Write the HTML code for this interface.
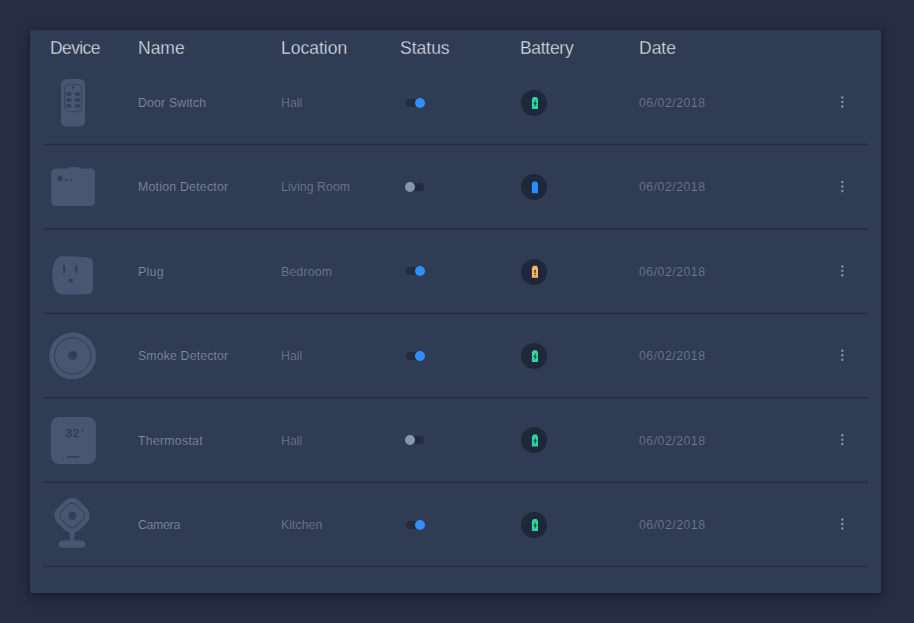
<!DOCTYPE html>
<html><head><meta charset="utf-8">
<style>
html,body{margin:0;padding:0;}
body{width:914px;height:623px;background:#262e43;position:relative;overflow:hidden;font-family:"Liberation Sans",sans-serif;}
.card{position:absolute;left:30px;top:30px;width:851px;height:563px;background:#303b54;border-radius:1.5px;box-shadow:0 2px 5px rgba(14,18,34,0.45),0 3px 14px rgba(14,18,34,0.3);}
.h{position:absolute;top:38px;color:#e2e7f0;font-size:17.5px;-webkit-text-stroke:0.35px #303b54;line-height:20px;white-space:nowrap;}
.t{position:absolute;font-size:12.3px;color:#818ca5;-webkit-text-stroke:0.15px #303b54;white-space:nowrap;line-height:14px;letter-spacing:0.25px;}
.t.loc{color:#6f7a92;}
.t.date{color:#6f7a92;letter-spacing:0.5px;}
.tog{position:absolute;width:18px;height:8px;border-radius:4px;background:#222b3f;}
.knob{position:absolute;top:-1px;width:10px;height:10px;border-radius:50%;}
.bat{position:absolute;width:26px;height:26px;border-radius:50%;background:#1f273b;}
.kebab{position:absolute;width:3px;}
.kebab i{display:block;width:2.4px;height:2.4px;border-radius:50%;background:#8f9ab0;margin-bottom:2px;}
svg{position:absolute;overflow:visible;}
</style></head>
<body>
<div class="card"></div>
<svg style="left:0;top:0" width="914" height="623"><g stroke="#242c41" stroke-width="1.35">
<line x1="43.5" x2="868" y1="144.50" y2="144.50"/>
<line x1="43.5" x2="868" y1="228.90" y2="228.90"/>
<line x1="43.5" x2="868" y1="313.30" y2="313.30"/>
<line x1="43.5" x2="868" y1="397.70" y2="397.70"/>
<line x1="43.5" x2="868" y1="482.10" y2="482.10"/>
<line x1="43.5" x2="868" y1="566.50" y2="566.50"/>
</g></svg>
<div class="h" style="left:50px;letter-spacing:-0.6px">Device</div>
<div class="h" style="left:138px">Name</div>
<div class="h" style="left:281px">Location</div>
<div class="h" style="left:400px">Status</div>
<div class="h" style="left:520px;letter-spacing:-0.3px">Battery</div>
<div class="h" style="left:639px">Date</div>
<div class="t" style="left:138px;top:95.9px;letter-spacing:0.18px">Door Switch</div>
<div class="t loc" style="left:281px;top:95.9px;letter-spacing:0px">Hall</div>
<div class="t date" style="left:639px;top:95.9px">06/02/2018</div>
<div class="tog" style="left:406px;top:98.5px"><div class="knob" style="left:9px;background:#2f8fff"></div></div>
<div class="bat" style="left:521.3px;top:89.7px"></div>
<svg style="left:0;top:0" width="914" height="623"><path d="M531.9 108.90 L531.9 99.10 L533.3 97.00 L536.6 97.00 L538 99.10 L538 108.90 Z" fill="#2fd59c"/><path d="M536.1 99.60 L533.4 103.70 L535.0 103.70 L534.3 107.30 L536.9 103.00 L535.3 103.00 Z" fill="#173a36"/></svg>
<svg style="left:0;top:0" width="914" height="623"><g fill="#8591a8"><circle cx="842.3" cy="97.60" r="1.25"/><circle cx="842.3" cy="102.05" r="1.25"/><circle cx="842.3" cy="106.50" r="1.25"/></g></svg>
<div class="t" style="left:138px;top:180.3px;letter-spacing:0.236px">Motion Detector</div>
<div class="t loc" style="left:281px;top:180.3px;letter-spacing:0.07px">Living Room</div>
<div class="t date" style="left:639px;top:180.3px">06/02/2018</div>
<div class="tog" style="left:406px;top:182.9px"><div class="knob" style="left:-1px;background:#8896ad"></div></div>
<div class="bat" style="left:521.3px;top:174.1px"></div>
<svg style="left:0;top:0" width="914" height="623"><path d="M531.9 193.30 L531.9 183.50 L533.3 181.40 L536.6 181.40 L538 183.50 L538 193.30 Z" fill="#2b8cff"/></svg>
<svg style="left:0;top:0" width="914" height="623"><g fill="#8591a8"><circle cx="842.3" cy="182.00" r="1.25"/><circle cx="842.3" cy="186.45" r="1.25"/><circle cx="842.3" cy="190.90" r="1.25"/></g></svg>
<div class="t" style="left:138px;top:264.7px;letter-spacing:0.3px">Plug</div>
<div class="t loc" style="left:281px;top:264.7px;letter-spacing:0.167px">Bedroom</div>
<div class="t date" style="left:639px;top:264.7px">06/02/2018</div>
<div class="tog" style="left:406px;top:267.3px"><div class="knob" style="left:9px;background:#2f8fff"></div></div>
<div class="bat" style="left:521.3px;top:258.5px"></div>
<svg style="left:0;top:0" width="914" height="623"><path d="M531.9 277.70 L531.9 267.90 L533.3 265.80 L536.6 265.80 L538 267.90 L538 277.70 Z" fill="#f7b661"/><rect x="534.35" y="269.90" width="1.3" height="3" fill="#2a2118"/><circle cx="535" cy="274.60" r="0.75" fill="#2a2118"/></svg>
<svg style="left:0;top:0" width="914" height="623"><g fill="#8591a8"><circle cx="842.3" cy="266.40" r="1.25"/><circle cx="842.3" cy="270.85" r="1.25"/><circle cx="842.3" cy="275.30" r="1.25"/></g></svg>
<div class="t" style="left:138px;top:349.1px;letter-spacing:0.154px">Smoke Detector</div>
<div class="t loc" style="left:281px;top:349.1px;letter-spacing:0px">Hall</div>
<div class="t date" style="left:639px;top:349.1px">06/02/2018</div>
<div class="tog" style="left:406px;top:351.7px"><div class="knob" style="left:9px;background:#2f8fff"></div></div>
<div class="bat" style="left:521.3px;top:342.9px"></div>
<svg style="left:0;top:0" width="914" height="623"><path d="M531.9 362.10 L531.9 352.30 L533.3 350.20 L536.6 350.20 L538 352.30 L538 362.10 Z" fill="#2fd59c"/><path d="M536.1 352.80 L533.4 356.90 L535.0 356.90 L534.3 360.50 L536.9 356.20 L535.3 356.20 Z" fill="#173a36"/></svg>
<svg style="left:0;top:0" width="914" height="623"><g fill="#8591a8"><circle cx="842.3" cy="350.80" r="1.25"/><circle cx="842.3" cy="355.25" r="1.25"/><circle cx="842.3" cy="359.70" r="1.25"/></g></svg>
<div class="t" style="left:138px;top:433.5px;letter-spacing:0.267px">Thermostat</div>
<div class="t loc" style="left:281px;top:433.5px;letter-spacing:0px">Hall</div>
<div class="t date" style="left:639px;top:433.5px">06/02/2018</div>
<div class="tog" style="left:406px;top:436.1px"><div class="knob" style="left:-1px;background:#8896ad"></div></div>
<div class="bat" style="left:521.3px;top:427.3px"></div>
<svg style="left:0;top:0" width="914" height="623"><path d="M531.9 446.50 L531.9 436.70 L533.3 434.60 L536.6 434.60 L538 436.70 L538 446.50 Z" fill="#2fd59c"/><path d="M536.1 437.20 L533.4 441.30 L535.0 441.30 L534.3 444.90 L536.9 440.60 L535.3 440.60 Z" fill="#173a36"/></svg>
<svg style="left:0;top:0" width="914" height="623"><g fill="#8591a8"><circle cx="842.3" cy="435.20" r="1.25"/><circle cx="842.3" cy="439.65" r="1.25"/><circle cx="842.3" cy="444.10" r="1.25"/></g></svg>
<div class="t" style="left:138px;top:517.9px;letter-spacing:-0.3px">Camera</div>
<div class="t loc" style="left:281px;top:517.9px;letter-spacing:0.05px">Kitchen</div>
<div class="t date" style="left:639px;top:517.9px">06/02/2018</div>
<div class="tog" style="left:406px;top:520.5px"><div class="knob" style="left:9px;background:#2f8fff"></div></div>
<div class="bat" style="left:521.3px;top:511.7px"></div>
<svg style="left:0;top:0" width="914" height="623"><path d="M531.9 530.90 L531.9 521.10 L533.3 519.00 L536.6 519.00 L538 521.10 L538 530.90 Z" fill="#2fd59c"/><path d="M536.1 521.60 L533.4 525.70 L535.0 525.70 L534.3 529.30 L536.9 525.00 L535.3 525.00 Z" fill="#173a36"/></svg>
<svg style="left:0;top:0" width="914" height="623"><g fill="#8591a8"><circle cx="842.3" cy="519.60" r="1.25"/><circle cx="842.3" cy="524.05" r="1.25"/><circle cx="842.3" cy="528.50" r="1.25"/></g></svg>
<svg style="left:0;top:0" width="914" height="623" viewBox="0 0 914 623"><rect x="61" y="79" width="24" height="47.5" rx="5.5" fill="#485671"/>
<rect x="64.6" y="84.4" width="17" height="27.2" rx="5" fill="none" stroke="#36415b" stroke-width="1"/>
<path d="M71.1 86.3 L74.7 86.3 L72.9 89.3 Z" fill="#323d56"/>
<g fill="#323d56">
<rect x="66.5" y="92.3" width="4.8" height="3.4" rx="0.8"/><rect x="75" y="92.3" width="4.8" height="3.4" rx="0.8"/>
<rect x="66.5" y="98.3" width="4.8" height="3.2" rx="0.8"/><rect x="75" y="98.3" width="4.8" height="3.2" rx="0.8"/>
<rect x="66.5" y="104.2" width="4.8" height="3.4" rx="0.8"/><rect x="75" y="104.2" width="4.8" height="3.4" rx="0.8"/>
</g>
<rect x="51.1" y="168.4" width="43.9" height="37.5" rx="4.5" fill="#485671"/>
<rect x="68" y="167.2" width="11.6" height="2" rx="0.8" fill="#485671"/>
<path d="M60 175.2 L62.7 176.8 L62.7 179.9 L60 181.5 L57.3 179.9 L57.3 176.8 Z" fill="#323d56"/>
<circle cx="66.5" cy="179.9" r="1.1" fill="#323d56"/><circle cx="70.7" cy="179.9" r="1.1" fill="#323d56"/>
<path d="M62 256.3 C72 256 82 256.6 88 257.6 C91.5 258.2 93 260.5 93 264 L93 288 C93 291.8 90.8 294 87 294.2 C80 294.6 70 294.6 62 294.4 C55.5 294 52.4 286 52.4 275.3 C52.4 264 55.5 256.6 62 256.3 Z" fill="#485671"/>
<path d="M62.9 265.6 L65.3 265.6 L64.8 273.3 L63.4 273.3 Z" fill="#323d56"/>
<path d="M75 265.6 L77.4 265.6 L76.9 273.3 L75.5 273.3 Z" fill="#323d56"/>
<path d="M68.5 282.2 L68.5 281 A2.2 2.2 0 0 1 72.9 281 L72.9 282.2 Z" fill="#323d56"/>
<circle cx="72.7" cy="355.9" r="23.4" fill="#485671"/>
<circle cx="72.7" cy="355.9" r="18.2" fill="none" stroke="#323d56" stroke-width="1"/>
<circle cx="72.6" cy="355.4" r="4.5" fill="#323d56"/>
<rect x="50.9" y="417" width="45" height="47" rx="8" fill="#485671"/>
<text x="65.6" y="436.9" font-family="Liberation Sans" font-size="11.8" letter-spacing="0.7" fill="#303b54" stroke="#303b54" stroke-width="0.45">32</text>
<circle cx="82.3" cy="430.2" r="1.05" fill="#303b54"/>
<rect x="66.9" y="456" width="12.6" height="1.5" fill="#323d56"/>
<rect x="72.1" y="500" width="4.6" height="42" x2="0" fill="#485671" transform="translate(-2.3 0)"/>
<rect x="58.8" y="540.6" width="26.4" height="7.2" rx="3.6" fill="#485671"/>
<rect x="56.6" y="500" width="31" height="31" rx="10" fill="#485671" transform="rotate(45 72.1 515.5)"/>
<rect x="61.6" y="505" width="21" height="21" rx="6" fill="none" stroke="#36415b" stroke-width="1.05" transform="rotate(45 72.1 515.5)"/>
<circle cx="72.4" cy="515.7" r="4" fill="#323d56"/></svg>
</body></html>
